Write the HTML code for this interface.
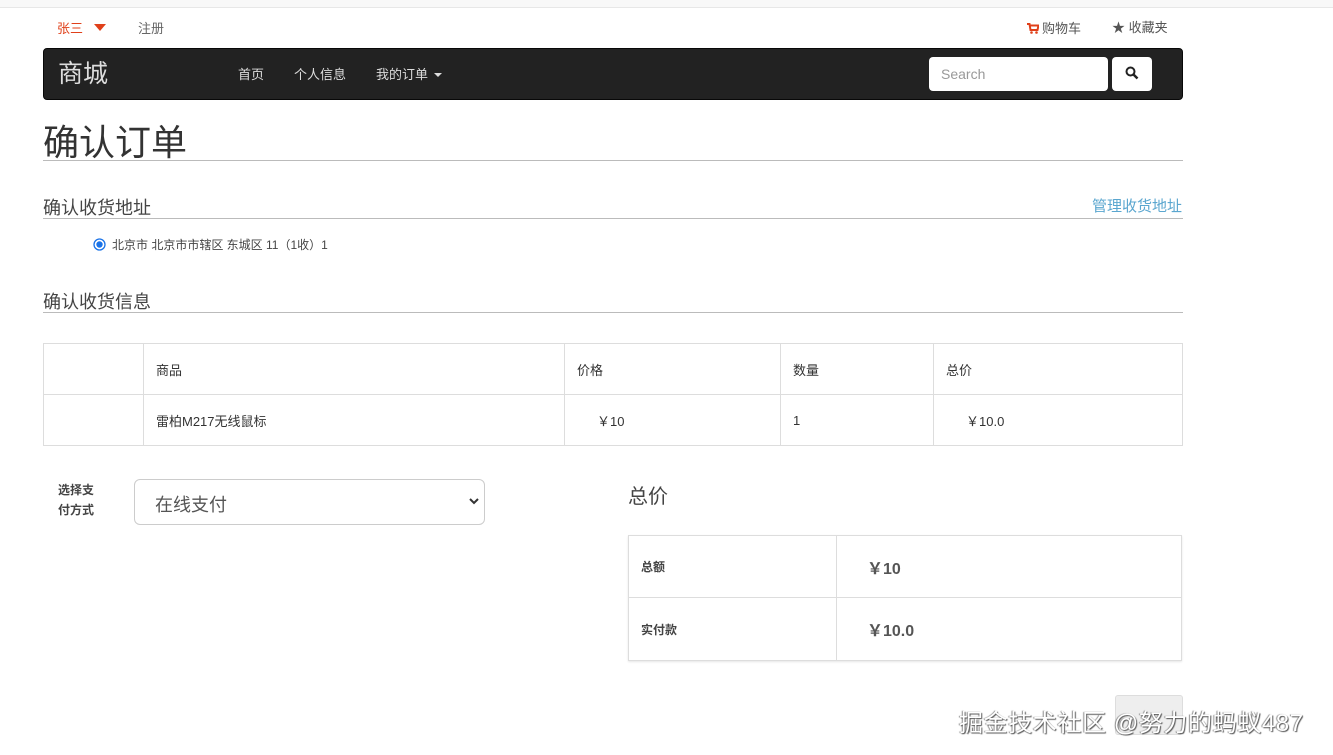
<!DOCTYPE html>
<html><head><meta charset="utf-8"><style>
*{box-sizing:border-box;margin:0;padding:0}
body{width:1333px;height:755px;overflow:hidden;background:#fff;font-family:"Liberation Sans","Noto Sans CJK SC",sans-serif;color:#333;position:relative}
.a{position:absolute;white-space:nowrap}
.topband{left:0;top:0;width:1333px;height:8px;background:#f8f8f8;border-bottom:1px solid #e7e7e7}
.nav{left:43px;top:48px;width:1140px;height:52px;background:#222;border-radius:4px;border:1px solid #080808}
.nv{color:#ddd;font-size:13px;top:64px}
.line{height:1px;background:#bbb;left:43px;width:1140px}
table{border-collapse:collapse;position:absolute}
td{border:1px solid #ddd;font-size:13px;padding:0 12px}
</style></head><body>
<div class="a topband"></div>
<div class="a" style="left:57px;top:18px;font-size:13px;color:#e0401a">张三</div>
<svg class="a" style="left:94px;top:24px" width="12" height="8"><path d="M0 0H12L6 7Z" fill="#e0401a"/></svg>
<div class="a" style="left:138px;top:18px;font-size:13px;color:#666">注册</div>
<svg class="a" style="left:1027px;top:23px" width="12" height="11" viewBox="0 0 12 11"><path d="M0 1H2.5L3.5 7H10.5L11.5 2.5H3" stroke="#e0401a" stroke-width="2" fill="none"/><circle cx="4.5" cy="9.5" r="1.3" fill="#e0401a"/><circle cx="9.5" cy="9.5" r="1.3" fill="#e0401a"/></svg>
<div class="a" style="left:1042px;top:18px;font-size:13px;color:#555">购物车</div>
<div class="a" style="left:1112px;top:17px;font-size:13px;color:#555">★ 收藏夹</div>
<div class="a nav"></div>
<div class="a" style="left:58px;top:54px;font-size:25px;color:#ddd">商城</div>
<div class="a nv" style="left:238px">首页</div>
<div class="a nv" style="left:294px">个人信息</div>
<div class="a nv" style="left:376px">我的订单</div>
<svg class="a" style="left:434px;top:73px" width="8" height="5"><path d="M0 0H8L4 4Z" fill="#ddd"/></svg>
<div class="a" style="left:929px;top:57px;width:179px;height:34px;background:#fff;border-radius:4px;color:#999;font-size:14px;padding:9px 12px">Search</div>
<div class="a" style="left:1112px;top:57px;width:40px;height:34px;background:#fff;border-radius:4px"></div>
<svg class="a" style="left:1125px;top:66px" width="14" height="14"><circle cx="5.5" cy="5.5" r="4" stroke="#222" stroke-width="2" fill="none"/><path d="M8.5 8.5L12.5 12.5" stroke="#222" stroke-width="2.5"/></svg>
<div class="a" style="left:43px;top:114px;font-size:36px;color:#333">确认订单</div>
<div class="a line" style="top:160px"></div>
<div class="a" style="left:43px;top:194px;font-size:18px;color:#444">确认收货地址</div>
<div class="a" style="left:1092px;top:195px;font-size:15px;color:#5aa6cf">管理收货地址</div>
<div class="a line" style="top:218px"></div>
<svg class="a" style="left:93px;top:238px" width="13" height="13"><circle cx="6.5" cy="6.5" r="5.5" fill="#fff" stroke="#1a73e8" stroke-width="1.3"/><circle cx="6.5" cy="6.5" r="3.2" fill="#1a73e8"/></svg>
<div class="a" style="left:112px;top:236px;font-size:12px;color:#444">北京市 北京市市辖区 东城区 11（1收）1</div>
<div class="a" style="left:43px;top:288px;font-size:18px;color:#444">确认收货信息</div>
<div class="a line" style="top:312px"></div>
<table style="left:43px;top:343px;width:1140px">
<tr style="height:51px"><td style="width:100px"></td><td style="width:421px">商品</td><td style="width:216px">价格</td><td style="width:153px">数量</td><td>总价</td></tr>
<tr style="height:51px"><td></td><td>雷柏M217无线鼠标</td><td style="padding-left:32px">￥10</td><td>1</td><td style="padding-left:32px">￥10.0</td></tr>
</table>
<div class="a" style="left:58px;top:480px;font-size:12px;font-weight:bold;color:#444;line-height:20px">选择支<br>付方式</div>
<div class="a" style="left:134px;top:479px;width:351px;height:46px;border:1px solid #ccc;border-radius:6px;font-size:18px;color:#555;padding:11px 20px">在线支付</div>
<svg class="a" style="left:469px;top:498px" width="10" height="7"><path d="M1 1L5 5L9 1" stroke="#333" stroke-width="2" fill="none"/></svg>
<div class="a" style="left:628px;top:480px;font-size:20px;color:#444">总价</div>
<table style="left:628px;top:535px;width:554px;box-shadow:0 1px 2px rgba(0,0,0,.1)">
<tr style="height:62px"><td style="width:208px;font-size:12px;font-weight:bold;color:#444">总额</td><td style="padding-left:30px;font-size:16px;font-weight:bold;color:#555">￥10</td></tr>
<tr style="height:63px"><td style="font-size:12px;font-weight:bold;color:#444">实付款</td><td style="padding-left:30px;font-size:16px;font-weight:bold;color:#555">￥10.0</td></tr>
</table>
<div class="a" style="left:1115px;top:695px;width:68px;height:40px;background:#eee;border:1px solid #ddd;border-radius:3px"></div>
<div class="a" style="left:959px;top:703px;font-size:24px;letter-spacing:0.6px;color:#fff;text-shadow:1px 1px 1px #555,-1px 0 1px #888">掘金技术社区 @努力的蚂蚁487</div>
</body></html>
